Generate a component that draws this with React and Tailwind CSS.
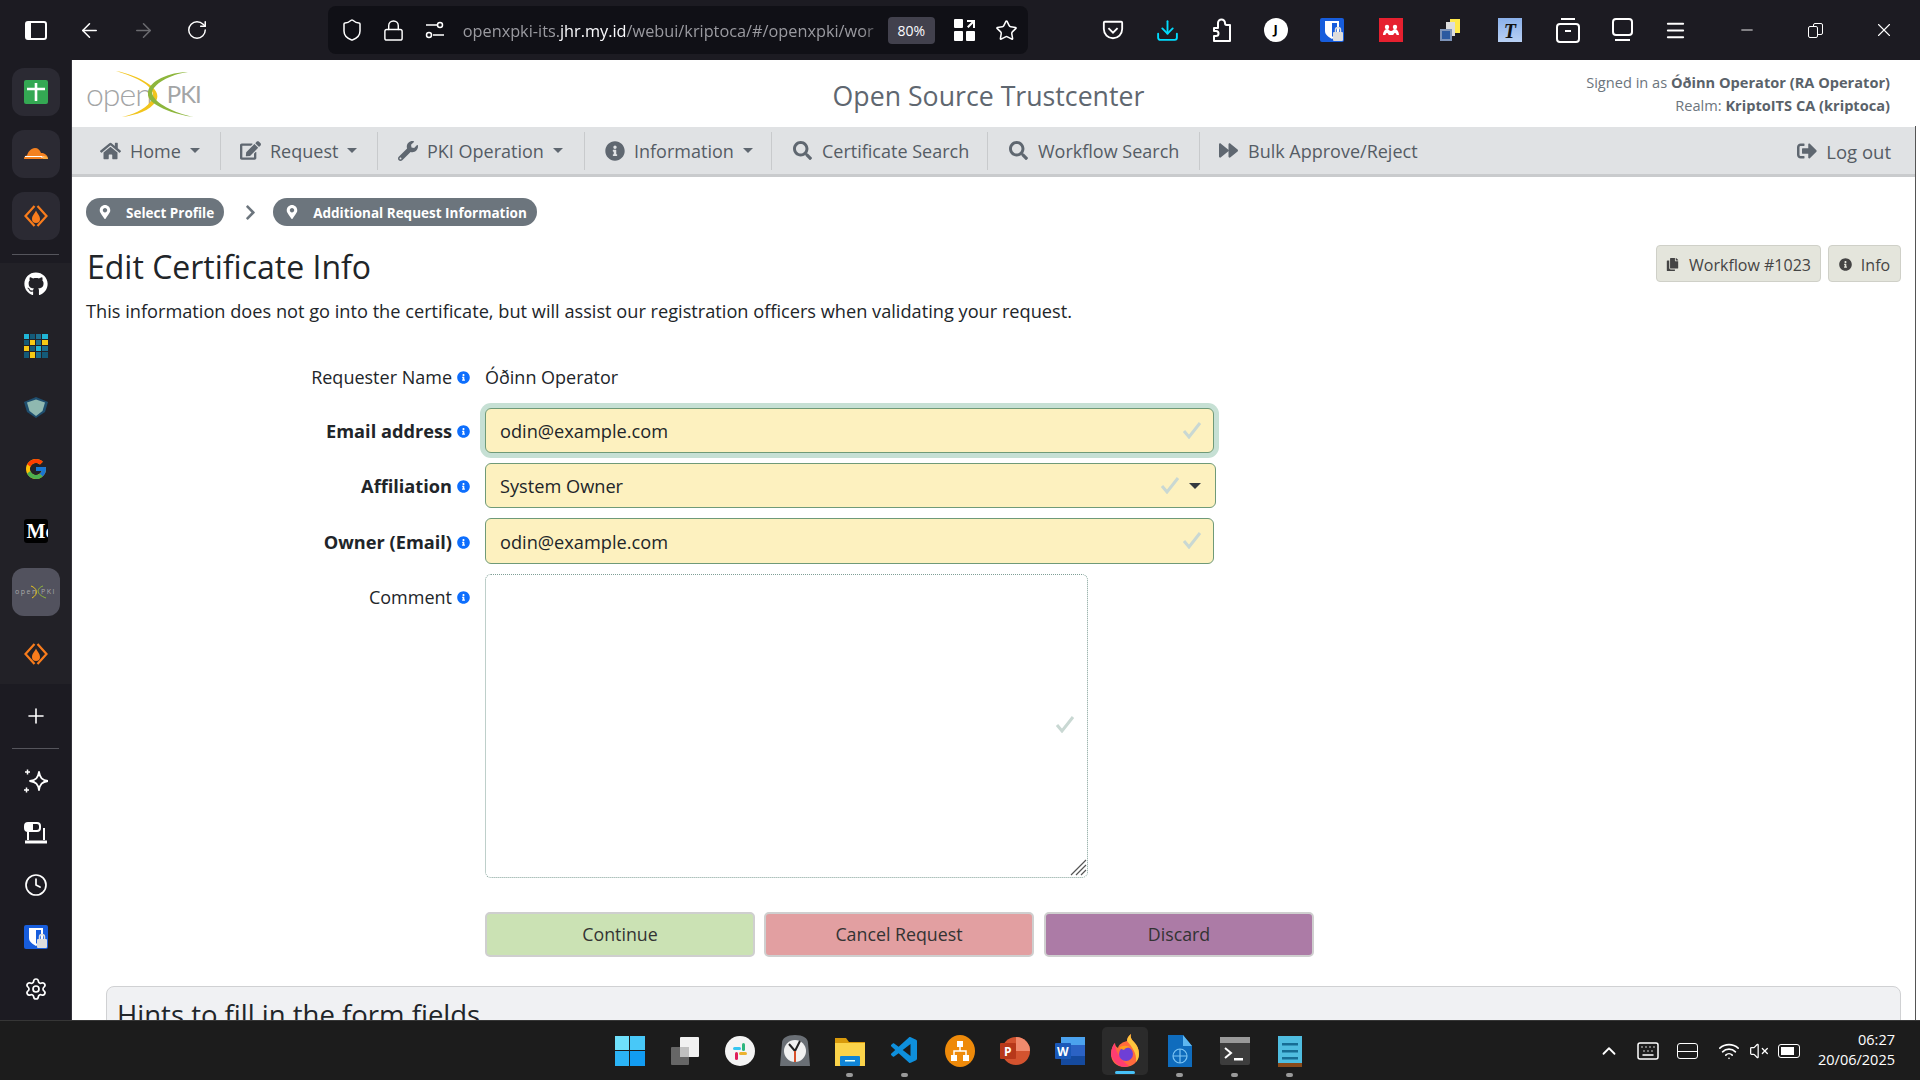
import React from "react";
import {
  FaChevronRight, FaEdit, FaForward, FaGithub, FaHome, FaInfoCircle,
  FaMapMarkerAlt, FaSearch, FaSignOutAlt, FaWrench, FaCopy,
} from "react-icons/fa";
import { FcGoogle } from "react-icons/fc";
import { VscVscode } from "react-icons/vsc";
import {
  ArrowLeft, ArrowRight, ChevronUp, Clock, Download, Keyboard, Lock, Menu, Minus, Plus,
  RotateCw, Settings, Shield, Star, VolumeX, Wifi, X,
} from "lucide-react";

const font = { fontFamily: '"Open Sans", sans-serif' };

const Caret = () => (
  <span className="border-x-[5px] border-t-[5px] border-x-transparent border-t-[#5f6770]" />
);

const navItems = [
  { icon: <FaHome size={22} />, label: "Home", caret: true, w: "w-[149px]", pl: "pl-[28px]" },
  { icon: <FaEdit size={21} />, label: "Request", caret: true, w: "w-[157px]", pl: "pl-[19px]" },
  { icon: <FaWrench size={20} />, label: "PKI Operation", caret: true, w: "w-[207px]", pl: "pl-[19px]" },
  { icon: <FaInfoCircle size={20} />, label: "Information", caret: true, w: "w-[187px]", pl: "pl-[19px]" },
  { icon: <FaSearch size={19} />, label: "Certificate Search", w: "w-[216px]", pl: "pl-[20px]" },
  { icon: <FaSearch size={19} />, label: "Workflow Search", w: "w-[212px]", pl: "pl-[20px]" },
  { icon: <FaForward size={19} />, label: "Bulk Approve/Reject", pl: "pl-[18px]", last: true },
];

const NavItem = ({ item }) => (
  <div
    className={`flex h-[38px] items-center gap-[9px] ${item.pl} ${item.w || ""} ${item.last ? "" : "border-r border-[#c8cacc]"}`}
  >
    <span className="flex w-[21px] justify-center text-[#5f6770]">{item.icon}</span>
    <span className="mt-[2px] text-[18px] text-[#555c64]">{item.label}</span>
    {item.caret && <Caret />}
  </div>
);

const Logo = () => (
  <div className="relative h-[50px] w-[112px]">
    <div className="flex h-full items-center text-[32px] leading-none tracking-[-1px] text-[#a3a5a6]" style={{ fontFamily: "Lato, sans-serif" }}>
      <span className="font-light">open</span>
      <span className="ml-[15px] text-[24px] font-normal">PKI</span>
    </div>
    <svg className="absolute left-0 top-0" width="112" height="50" viewBox="0 0 112 50">
      <path d="M30 2 C52 6 78 20 70 32 C64 42 50 46 36 48 C52 44 62 38 66 30 C72 18 50 8 30 2Z" fill="#f2c51d" />
      <path d="M102 3 C84 5 66 16 66 24 C68 34 88 44 108 48 C90 46 60 36 62 24 C62 12 84 3 102 3Z" fill="#8db63c" />
    </svg>
  </div>
);

const BreadPill = ({ children }) => (
  <div className="flex h-[28px] items-center gap-[14px] rounded-full bg-[#6c757d] pl-[12px] pr-[10px]">
    <FaMapMarkerAlt size={14} color="#fff" />
    <span className="pt-[2px] text-[13.5px] font-bold text-white">{children}</span>
  </div>
);

const Label = ({ children, bold }) => (
  <div className="flex w-[385px] items-center justify-end gap-[5px]">
    <span className={`text-[#212529] ${bold ? "text-[18.2px] font-bold" : "text-[18px]"}`}>{children}</span>
    <FaInfoCircle size={13} color="#0d6efd" className="mr-[1px]" />
  </div>
);

const FieldCheck = ({ className }) => (
  <svg width="20" height="18" viewBox="0 0 20 18" fill="none" stroke="#c9d8d3" strokeWidth="3" className={`absolute ${className}`}>
    <path d="M2 10l5 6L18 2" />
  </svg>
);

const Field = ({ label, value, ring, wide, select, tall, mb }) => (
  <div className={`flex items-center ${mb}`}>
    <div className="pt-[3px]"><Label bold>{label}</Label></div>
    <div className={`relative ml-[14px] ${tall ? "h-[46px]" : "h-[45px]"} ${wide ? "w-[731px]" : "w-[729px]"}`}>
      <input
        readOnly
        value={value}
        className={`h-full w-full rounded-[6px] border border-[#6f9a78] bg-[#fdf1bf] pl-[14px] pt-[1px] text-[18.2px] text-[#212529] outline-none ${ring ? "shadow-[0_0_0_5px_#c6e0d4]" : ""}`}
        style={font}
      />
      <FieldCheck className={select ? "right-[36px] top-[13px]" : "right-[12px] top-[13px]"} />
      {select && (
        <span className="absolute right-[15px] top-[20px] border-x-[6px] border-t-[6px] border-x-transparent border-t-[#343a40]" />
      )}
    </div>
  </div>
);

const Btn = ({ children, bg }) => (
  <button className={`h-[45px] w-[270px] rounded-[5px] border-2 border-[#cfcfcf] text-[17.8px] text-[#333] ${bg}`}>
    {children}
  </button>
);

const Tile = ({ children, tile }) => (
  <div className="flex h-[48px] items-center justify-center">
    <div className={`flex h-[48px] w-[48px] items-center justify-center rounded-[12px] ${tile ? "bg-[#2b2a33]" : ""}`}>
      {children}
    </div>
  </div>
);

const Diamond = () => (
  <svg width="24" height="24" viewBox="0 0 24 24" fill="none" stroke="#f97c1c" strokeWidth="2.2">
    <path d="M10.5 2 1.5 12l9 10M13.5 2l9 10-9 10" />
    <path d="M12 6.5c1 3 4 5 4 8.5a4 4 0 0 1-8 0c0-3.5 3-5.5 4-8.5Z" fill="#f97c1c" stroke="none" />
  </svg>
);

const Cloud = () => (
  <svg width="24" height="24" viewBox="0 1 24 24">
    <path d="M0 18c0-2 1-3.5 3-3.5C4 11 7 7 11 7c3 0 5 2 6 5 3-.5 7 2 7 6H0Z" fill="#f48120" />
    <path d="M1 15.5h17" stroke="#fff" strokeWidth="1" />
    <path d="M17 16h4" stroke="#fff" strokeWidth="1" />
    <path d="M19 18c0-2 1-3 2-3s3 1 3 3h-5Z" fill="#fbad41" />
  </svg>
);

const GridIcon = () => {
  const c = ["#20b5d6", "#145a78", "#1c6f8f", "#20b5d6", "#145a78", "#f6c915", "#1c6f8f", "#f6c915", "#f6c915", "#145a78", "#20b5d6", "#1c6f8f", "#145a78", "#f6c915", "#1c6f8f", "#145a78"];
  return (
    <div className="grid h-[24px] w-[24px] grid-cols-4 gap-px">
      {c.map((x, i) => <span key={i} style={{ background: x }} />)}
    </div>
  );
};

const BitwardenTile = () => (
  <svg width="24" height="24" viewBox="0 0 24 24">
    <rect width="24" height="24" rx="2" fill="#175ddc" />
    <path d="M5 3h14v10c0 4-4 6-7 8-3-2-7-4-7-8V3Z" fill="#fff" />
    <path d="M12 5h5v8c0 3-3 4-5 6V5Z" fill="#175ddc" />
    <rect x="13" y="14" width="10" height="9" rx="1" fill="#ddd" />
    <path d="M15.5 14v-2a2.5 2.5 0 0 1 5 0v2" fill="none" stroke="#ddd" strokeWidth="1.5" />
  </svg>
);

const sideTop = [
  <Tile tile key="a">
    <svg width="24" height="24" viewBox="0 0 24 24">
      <rect width="24" height="24" rx="2" fill="#34a853" />
      <path d="M12 3v18M3 9h18" stroke="#fff" strokeWidth="2.6" />
    </svg>
  </Tile>,
  <Tile tile key="b"><Cloud /></Tile>,
  <Tile tile key="c"><Diamond /></Tile>,
];

const sideMid = [
  <FaGithub key="gh" size={24} color="#fff" />,
  <GridIcon key="grid" />,
  <svg key="sh" width="24" height="24" viewBox="0 0 24 24">
    <path d="M0 7 12 2l12 5-3 10-9 6-9-6L0 7Z" fill="#1f4e6e" />
    <path d="M3 7.5l9-3 9 3-2.5 8.5-6.5 5-6.5-5L3 7.5Z" fill="#8fb8b0" />
  </svg>,
  <FcGoogle key="g" size={24} />,
  <div key="m" className="flex h-[24px] w-[24px] items-center overflow-hidden rounded-[3px] bg-black pl-[3px] text-[20px] font-bold text-white" style={{ fontFamily: '"Liberation Serif", serif' }}>Mc</div>,
  <div key="ox" className="relative flex h-[48px] w-[48px] shrink-0 items-center justify-center rounded-[12px] bg-[#52525e]">
    <div className="text-[7px] tracking-[1.5px] text-[#a8a8a8]">open PKI</div>
    <svg className="absolute left-[12px] top-[17px]" width="24" height="14" viewBox="0 0 24 14" fill="none" strokeWidth="1">
      <path d="M7 1c6 2 8 8 1 12" stroke="#e6c21f" />
      <path d="M19 1c-6 2-8 8 3 12" stroke="#8db63c" />
    </svg>
  </div>,
  <Diamond key="d" />,
];

const bottomIcon = "h-[24px] w-[24px] text-white";

const TopIcon = ({ w, children }) => (
  <div className={`flex h-full items-center justify-center ${w}`}>{children}</div>
);

const Win = () => (
  <div className="grid h-[30px] w-[30px] grid-cols-2 gap-[1px]">
    <span className="bg-[#6fe0fb]" /><span className="bg-[#48c8f8]" />
    <span className="bg-[#2bb4f6]" /><span className="bg-[#129cf2]" />
  </div>
);

const task = [
  <Win key="win" />,
  <svg key="tv" width="30" height="30" viewBox="0 0 30 30"><rect x="10" y="1" width="19" height="20" rx="1" fill="#f1f1f1" /><rect x="1" y="11" width="18" height="18" rx="1" fill="#666" /><rect x="10" y="11" width="9" height="10" fill="#c0c0c0" /></svg>,
  <svg key="sl" width="30" height="30" viewBox="0 0 30 30"><circle cx="15" cy="15" r="15" fill="#f4f4f4" /><rect x="8" y="11" width="8" height="3" rx="1.5" fill="#36c5f0" /><rect x="17" y="7" width="3" height="8" rx="1.5" fill="#2eb67d" /><rect x="14" y="16" width="8" height="3" rx="1.5" fill="#ecb22e" /><rect x="10" y="16" width="3" height="8" rx="1.5" fill="#e01e5a" /></svg>,
  <svg key="cl" width="30" height="32" viewBox="0 0 30 32"><path d="M0 31 2 8C2 3 7 0 15 0s13 3 13 8l2 23Z" fill="#6a6f75" /><circle cx="15" cy="16" r="11" fill="#f1f1f1" /><path d="M15 16 9 9M15 16l5-10" stroke="#222" strokeWidth="2" /><path d="M15 16v11" stroke="#d8512b" strokeWidth="2" /></svg>,
  <svg key="fo" width="30" height="30" viewBox="0 0 30 30"><path d="M0 2h11l3 4h16v24H0Z" fill="#d99a0b" /><rect y="7" width="30" height="23" fill="#fbd34a" /><rect x="5" y="20" width="20" height="10" rx="1" fill="#0f84d6" /><rect x="10" y="24" width="10" height="1.5" fill="#dff" /></svg>,
  <VscVscode key="vs" size={32} color="#0e8fdc" />,
  <svg key="dr" width="30" height="32" viewBox="0 0 30 32"><ellipse cx="15" cy="16" rx="15" ry="16" fill="#ee8a0a" /><g fill="#fff"><rect x="12" y="6" width="6" height="6" /><rect x="6" y="20" width="6" height="6" /><rect x="18" y="20" width="6" height="6" /></g><path d="M15 12v4M9 20v-4h12v4" stroke="#fff" fill="none" strokeWidth="1.5" /></svg>,
  <svg key="pp" width="30" height="30" viewBox="0 0 30 30"><circle cx="16" cy="15" r="14" fill="#d3532f" /><path d="M16 1a14 14 0 0 1 14 14H16Z" fill="#f08a6d" /><rect x="0" y="7" width="16" height="16" rx="1" fill="#b7381a" /><text x="4" y="20" fontSize="12" fontWeight="700" fill="#fff" fontFamily="Open Sans">P</text></svg>,
  <svg key="wd" width="30" height="30" viewBox="0 0 30 30"><rect x="6" y="1" width="24" height="28" rx="1" fill="#2b62c4" /><rect x="6" y="1" width="24" height="8" fill="#4ba2ee" /><rect x="6" y="20" width="24" height="9" fill="#154a9e" /><rect x="0" y="7" width="16" height="16" rx="1" fill="#1a58b8" /><text x="2" y="20" fontSize="12" fontWeight="700" fill="#fff" fontFamily="Open Sans">W</text></svg>,
  null,
  <svg key="fi" width="24" height="32" viewBox="0 0 24 32"><path d="M0 0h15l9 11v21H0Z" fill="#0f6cbd" /><path d="M15 0l9 11h-9Z" fill="#5db7f1" /><circle cx="12" cy="21" r="7" fill="none" stroke="#7cc4f3" strokeWidth="1.2" /><path d="M5 21h14M12 14v14" stroke="#7cc4f3" strokeWidth="1.2" /></svg>,
  <svg key="te" width="30" height="30" viewBox="0 0 30 30"><rect y="1" width="30" height="28" rx="2" fill="#3d3d3d" /><rect y="1" width="30" height="6" fill="#9a9a9a" /><path d="M5 12l6 5-6 5" stroke="#fff" strokeWidth="2" fill="none" /><rect x="14" y="22" width="9" height="2.5" fill="#fff" /></svg>,
  <svg key="no" width="24" height="32" viewBox="0 0 24 32"><rect y="1" width="24" height="28" fill="#4fbde0" /><rect y="28" width="24" height="4" fill="#8a4a1a" /><g fill="#166d94"><rect x="4" y="8" width="16" height="2.5" /><rect x="4" y="15" width="16" height="2.5" /><rect x="4" y="22" width="16" height="2.5" /></g></svg>,
];
const pinned = [false, false, false, false, true, true, false, false, false, false, true, true, true];

const Firefox = () => (
  <svg width="30" height="34" viewBox="0 0 30 34">
    <path d="M15 33C6 33 1 27 1 20c0-5 2-9 4-11 0 2 1 4 3 5 1-4 5-6 9-7 0-2 1-5 4-7-1 3 0 5 3 8 3 3 5 7 5 12 0 7-6 13-14 13Z" fill="#ff6a3d" />
    <path d="M21 0c-1 3 0 5 3 8 3 3 5 7 5 12 0 3-1 6-3 8 1-9-4-15-9-21 0-2 1-5 4-7Z" fill="#ffc53d" />
    <path d="M5 28C2 24 1 22 1 20c0-5 2-9 4-11 0 6 3 15 14 23-6 2-11 0-14-4Z" fill="#ff3d71" />
    <circle cx="16" cy="20" r="7" fill="#6e3fd6" />
    <path d="M9 14c3-3 9-3 12 0-3-1-6 0-7 2Z" fill="#ff9d1c" />
  </svg>
);

export default function App() {
  return (
    <div className="flex h-screen w-full flex-col overflow-hidden bg-[#1c1b22]" style={font}>
      {/* browser toolbar */}
      <div className="flex h-[60px] shrink-0 items-center bg-[#1c1b22] pl-[9px] text-white">
        <TopIcon w="w-[54px]"><div className="h-[19px] w-[22px] rounded-[3px] border-2 border-white border-l-[6px]" /></TopIcon>
        <TopIcon w="w-[54px]"><ArrowLeft size={23} strokeWidth={1.6} /></TopIcon>
        <TopIcon w="w-[54px]"><ArrowRight size={23} strokeWidth={1.6} color="#6b6b70" /></TopIcon>
        <TopIcon w="w-[54px]"><RotateCw size={22} strokeWidth={1.6} /></TopIcon>
        <div className="ml-[104px] flex h-[48px] w-[702px] items-center rounded-[8px] bg-[#101016]">
          <TopIcon w="w-[46px] ml-[1px]"><Shield size={24} strokeWidth={1.5} /></TopIcon>
          <TopIcon w="w-[38px]"><Lock size={23} strokeWidth={1.5} /></TopIcon>
          <TopIcon w="w-[44px]">
            <svg width="22" height="20" viewBox="0 0 22 20" fill="none" stroke="#fff" strokeWidth="1.5">
              <circle cx="16" cy="5" r="2.5" /><circle cx="5" cy="15" r="2.5" />
              <path d="M2 5h11M9 15h11" />
            </svg>
          </TopIcon>
          <div className="w-[429px] overflow-hidden whitespace-nowrap pl-[6px] pt-[2px] text-[16.3px] text-[#9a9aa0] [mask-image:linear-gradient(to_left,transparent,black_24px)]">
            openxpki-its.<span className="text-[#fbfbfe]">jhr.my.id</span>/webui/kriptoca/#/openxpki/wor
          </div>
          <div className="ml-[2px] flex h-[27px] w-[47px] items-center justify-center rounded-[4px] bg-[#42414d] text-[14px] text-[#fbfbfe]">80%</div>
          <svg className="ml-[19px]" width="22" height="22" viewBox="0 0 22 22" fill="#fff">
            <rect width="9" height="9" rx="1" /><rect y="12" width="9" height="10" rx="1" /><rect x="12" y="12" width="9" height="10" rx="1" />
            <path d="M13 1h8v8h-2V4.5l-4.5 4.5L13 7.5 17.5 3H13Z" />
          </svg>
          <TopIcon w="w-[42px] ml-[10px]"><Star size={23} strokeWidth={1.6} /></TopIcon>
        </div>
        <TopIcon w="w-[56px] ml-[57px]">
          <svg width="22" height="22" viewBox="0 0 24 24" fill="none" stroke="#fff" strokeWidth="2"><path d="M3 3h18a1 1 0 0 1 1 1v7a10 10 0 0 1-20 0V4a1 1 0 0 1 1-1Z" /><path d="m7 10 5 5 5-5" /></svg>
        </TopIcon>
        <TopIcon w="w-[54px]"><Download size={25} strokeWidth={1.8} color="#00ddff" /></TopIcon>
        <TopIcon w="w-[55px]">
          <svg width="22" height="25" viewBox="0 0 22 25" fill="none" stroke="#fff" strokeWidth="2" strokeLinejoin="round">
            <path d="M8 10V5a3.5 3.5 0 0 1 7 0c0 1 .5 2 1.5 2H20v16H4v-5h2a2.5 2.5 0 0 0 0-5H4v-3Z" />
          </svg>
        </TopIcon>
        <TopIcon w="w-[54px]"><div className="flex h-[24px] w-[24px] items-center justify-center rounded-full bg-white text-[13px] font-bold text-black">J</div></TopIcon>
        <TopIcon w="w-[59px]"><BitwardenTile /></TopIcon>
        <TopIcon w="w-[60px]">
          <svg width="24" height="24" viewBox="0 0 24 24" fill="#fff">
            <rect width="24" height="24" fill="#e6202f" />
            <circle cx="8" cy="9" r="2.2" /><circle cx="16" cy="9" r="2.2" />
            <path d="M4 17c0-3 2-6 4-6s2 2 4 2 2-2 4-2 4 3 4 6h-2.5c0-1-.5-2-1.5-2s-1.5 2-2 2h-4c-.5 0-1-2-2-2s-1.5 1-1.5 2Z" />
          </svg>
        </TopIcon>
        <TopIcon w="w-[59px]">
          <svg width="24" height="24" viewBox="0 0 24 24"><rect x="12" y="1" width="10" height="14" fill="#ffe94d" /><rect x="8" y="4" width="9" height="14" fill="#ddd" /><rect x="2" y="11" width="12" height="12" fill="#7d93b8" /><rect x="4" y="13" width="8" height="8" fill="#2c5aa0" /></svg>
        </TopIcon>
        <TopIcon w="w-[61px]">
          <div className="flex h-[24px] w-[24px] items-end justify-center bg-gradient-to-b from-[#8ab0ea] to-[#b8d0f4] text-[20px] font-bold italic leading-[22px] text-[#111]" style={{ fontFamily: '"Liberation Serif", serif' }}>T</div>
        </TopIcon>
        <TopIcon w="w-[56px]">
          <svg width="24" height="26" viewBox="0 0 24 26" fill="none" stroke="#fff" strokeWidth="2">
            <rect x="1" y="7" width="22" height="18" rx="3" /><path d="M5 2h14" /><path d="M9 14h6" />
          </svg>
        </TopIcon>
        <TopIcon w="w-[54px]">
          <svg width="21" height="24" viewBox="0 0 21 24" fill="none" stroke="#fff" strokeWidth="2">
            <rect x="1" y="1" width="19" height="16" rx="3" /><path d="M3 22h15" />
          </svg>
        </TopIcon>
        <TopIcon w="w-[53px]"><Menu size={23} strokeWidth={2} /></TopIcon>
        <TopIcon w="w-[72px] ml-[9px]"><Minus size={18} strokeWidth={1.2} /></TopIcon>
        <TopIcon w="w-[66px]">
          <div className="relative h-[15px] w-[15px]">
            <div className="absolute right-0 top-0 h-[12px] w-[10px] rounded-[2px] border border-white" />
            <div className="absolute bottom-0 left-0 h-[12px] w-[10px] rounded-[2px] border border-white bg-[#1c1b22]" />
          </div>
        </TopIcon>
        <TopIcon w="w-[72px]"><X size={22} strokeWidth={1.2} /></TopIcon>
      </div>

      <div className="flex min-h-0 flex-1">
        {/* firefox sidebar */}
        <div className="flex w-[72px] shrink-0 flex-col border-r border-[#33323a] bg-[#1c1b22] pt-[8px]">
          <div className="flex flex-col gap-[14px]">{sideTop}</div>
          <div className="mx-[12px] mt-[14px] border-t border-[#55555c]" />
          <div className="mt-[8px] flex h-[421px] flex-col items-center gap-[37.67px] bg-[#222127] pt-[9px]">
            {sideMid.map((ic, i) => (
              <div key={i} className="flex h-[24px] w-full items-center justify-center">{ic}</div>
            ))}
          </div>
          <div className="flex h-[64px] items-center justify-center"><Plus size={24} color="#fff" strokeWidth={1.6} /></div>
          <div className="mx-[12px] border-t border-[#55555c]" />
          <div className="flex flex-1 flex-col items-center gap-[28px] pt-[20px]">
            <svg className={bottomIcon} viewBox="0 0 24 24" fill="none" stroke="#fff" strokeWidth="1.8" strokeLinejoin="round">
              <path d="M15 3c1 6 3 8 9 9-6 1-8 3-9 9-1-6-3-8-9-9 6-1 8-3 9-9Z" />
              <path d="M1 3h5M3.5 .5v5M0 21h5M2.5 18.5v5" strokeWidth="1.5" />
            </svg>
            <svg className={bottomIcon} viewBox="0 0 24 24" fill="none" stroke="#fff" strokeWidth="2"><rect x="1" y="2" width="15" height="8" rx="3" /><rect x="3" y="4" width="5" height="4" fill="#fff" /><path d="M20 7v12M4 11v8" /><path d="M1 21h22" strokeWidth="3" /></svg>
            <Clock className={bottomIcon} strokeWidth={1.7} />
            <BitwardenTile />
            <Settings className={bottomIcon} strokeWidth={1.7} />
          </div>
        </div>

        {/* page */}
        <div className="relative min-w-0 flex-1 overflow-hidden bg-white pr-[5px]">
          <div className="absolute bottom-0 right-[4px] top-[66px] w-[1px] bg-[#555]" />
          <div className="relative flex h-[67px] items-center pl-[14px] pr-[25px]">
            <Logo />
            <div className="absolute left-0 right-[10px] top-[14px] text-center text-[26.7px] leading-[44px] text-[#5f6770]">
              Open Source Trustcenter
            </div>
            <div className="ml-auto text-right text-[14.6px] leading-[23px] text-[#6c757d]">
              <div>Signed in as <b className="text-[#5a626a]">Óðinn Operator (RA Operator)</b></div>
              <div>Realm: <b className="text-[#5a626a]">KriptoITS CA (kriptoca)</b></div>
            </div>
          </div>

          <div className="flex h-[50px] items-center border-b-[3px] border-[#c9cbcd] bg-[#e0e2e4] pr-[24px]">
            {navItems.map((item) => <NavItem key={item.label} item={item} />)}
            <div className="ml-auto flex items-center gap-[9px] text-[#555c64]">
              <FaSignOutAlt size={20} className="text-[#5f6770]" />
              <span className="mt-[2px] text-[18.5px]">Log out</span>
            </div>
          </div>

          <div className="pl-[14px] pr-[14px] pt-[21px]">
            <div className="flex items-center">
              <BreadPill>Select Profile</BreadPill>
              <FaChevronRight size={17} color="#6c757d" className="ml-[18px] mr-[14px]" />
              <BreadPill>Additional Request Information</BreadPill>
            </div>

            <div className="mt-[19px] flex items-start justify-between">
              <h1 className="pl-[1px] text-[32px] leading-[44px] text-[#212529]">Edit Certificate Info</h1>
              <div className="flex gap-[7px]">
                <div className="flex h-[37px] w-[165px] items-center justify-center gap-[10px] rounded-[4px] border border-[#cfd0c8] bg-[#e4e5dc] pt-[2px] text-[16px] text-[#444]">
                  <FaCopy size={13} />Workflow #1023
                </div>
                <div className="flex h-[37px] w-[73px] items-center justify-center gap-[9px] rounded-[4px] border border-[#cfd0c8] bg-[#e4e5dc] pt-[2px] text-[16px] text-[#444]">
                  <FaInfoCircle size={13} />Info
                </div>
              </div>
            </div>
            <p className="mt-[10px] text-[18.2px] leading-[24px] text-[#212529]">
              This information does not go into the certificate, but will assist our registration officers when validating your request.
            </p>

            <div className="mt-[41px] flex items-center">
              <Label>Requester Name</Label>
              <span className="ml-[14px] text-[18px] text-[#212529]">Óðinn Operator</span>
            </div>
            <div className="mt-[17px]">
              <Field label="Email address" value="odin@example.com" ring mb="mb-[10px]" />
              <Field label="Affiliation" value="System Owner" select wide mb="mb-[10px]" />
              <Field label="Owner (Email)" value="odin@example.com" tall mb="mb-[10px]" />
            </div>
            <div className="flex items-start">
              <div className="pt-[10px]"><Label>Comment</Label></div>
              <div className="relative ml-[14px] h-[304px] w-[603px]">
                <textarea readOnly className="h-full w-full resize-none rounded-[6px] border border-dotted border-[#7f9f96] outline-none" />
                <FieldCheck className="right-[13px] top-[141px]" />
                <svg className="absolute bottom-[2px] right-[1px]" width="18" height="18" viewBox="0 0 18 18" stroke="#555" strokeWidth="1.2">
                  <path d="M2 17 17 2M7 17 17 7M12 17l5-5" />
                </svg>
              </div>
            </div>
            <div className="ml-[399px] mt-[34px] flex gap-[9px]">
              <Btn bg="bg-[#cbe2b4]">Continue</Btn>
              <Btn bg="bg-[#e29fa1]">Cancel Request</Btn>
              <div className="ml-[1px]"><Btn bg="bg-[#ac7ba6]">Discard</Btn></div>
            </div>
            <div className="ml-[20px] mt-[29px] h-[60px] rounded-t-[8px] border border-[#d0d1d3] bg-[#f0f1f3] pl-[10px] pt-[8px] text-[27.5px] leading-[40px] text-[#212529]">
              Hints to fill in the form fields
            </div>
          </div>
        </div>
      </div>

      {/* windows taskbar */}
      <div className="relative z-10 flex h-[60px] shrink-0 items-center border-t border-[#363636] bg-[#1c1c1c] pl-[602px] text-white">
        {task.map((ic, i) => (
          <div key={i} className="relative flex h-[48px] w-[55px] items-center justify-center">
            {ic || (
              <div className="flex h-[48px] w-[46px] items-center justify-center rounded-[5px] bg-[#2b2b2b]">
                <Firefox />
              </div>
            )}
            {pinned[i] && <span className="absolute bottom-[-2px] h-[4px] w-[7px] rounded-full bg-[#9a9a9a]" />}
            {!ic && <span className="absolute bottom-[1px] h-[3px] w-[20px] rounded-full bg-[#47c1f7]" />}
          </div>
        ))}
        <div className="ml-[281px] flex items-center">
          <ChevronUp size={22} strokeWidth={2} />
          <Keyboard size={24} strokeWidth={1.5} className="ml-[16px]" />
          <div className="ml-[17px] h-[16px] w-[21px] rounded-[3px] border border-white">
            <div className="mt-[7px] border-t border-white" />
          </div>
          <Wifi size={22} strokeWidth={1.8} className="ml-[20px]" />
          <VolumeX size={20} strokeWidth={1.5} className="ml-[9px]" />
          <div className="relative ml-[9px] h-[14px] w-[22px] rounded-[3px] border border-white">
            <div className="m-[2px] h-[8px] w-[13px] bg-white" />
          </div>
        </div>
        <div className="ml-auto pb-[2px] pr-[25px] text-right text-[14.5px] leading-[20px]">
          <div>06:27</div>
          <div>20/06/2025</div>
        </div>
      </div>
    </div>
  );
}
